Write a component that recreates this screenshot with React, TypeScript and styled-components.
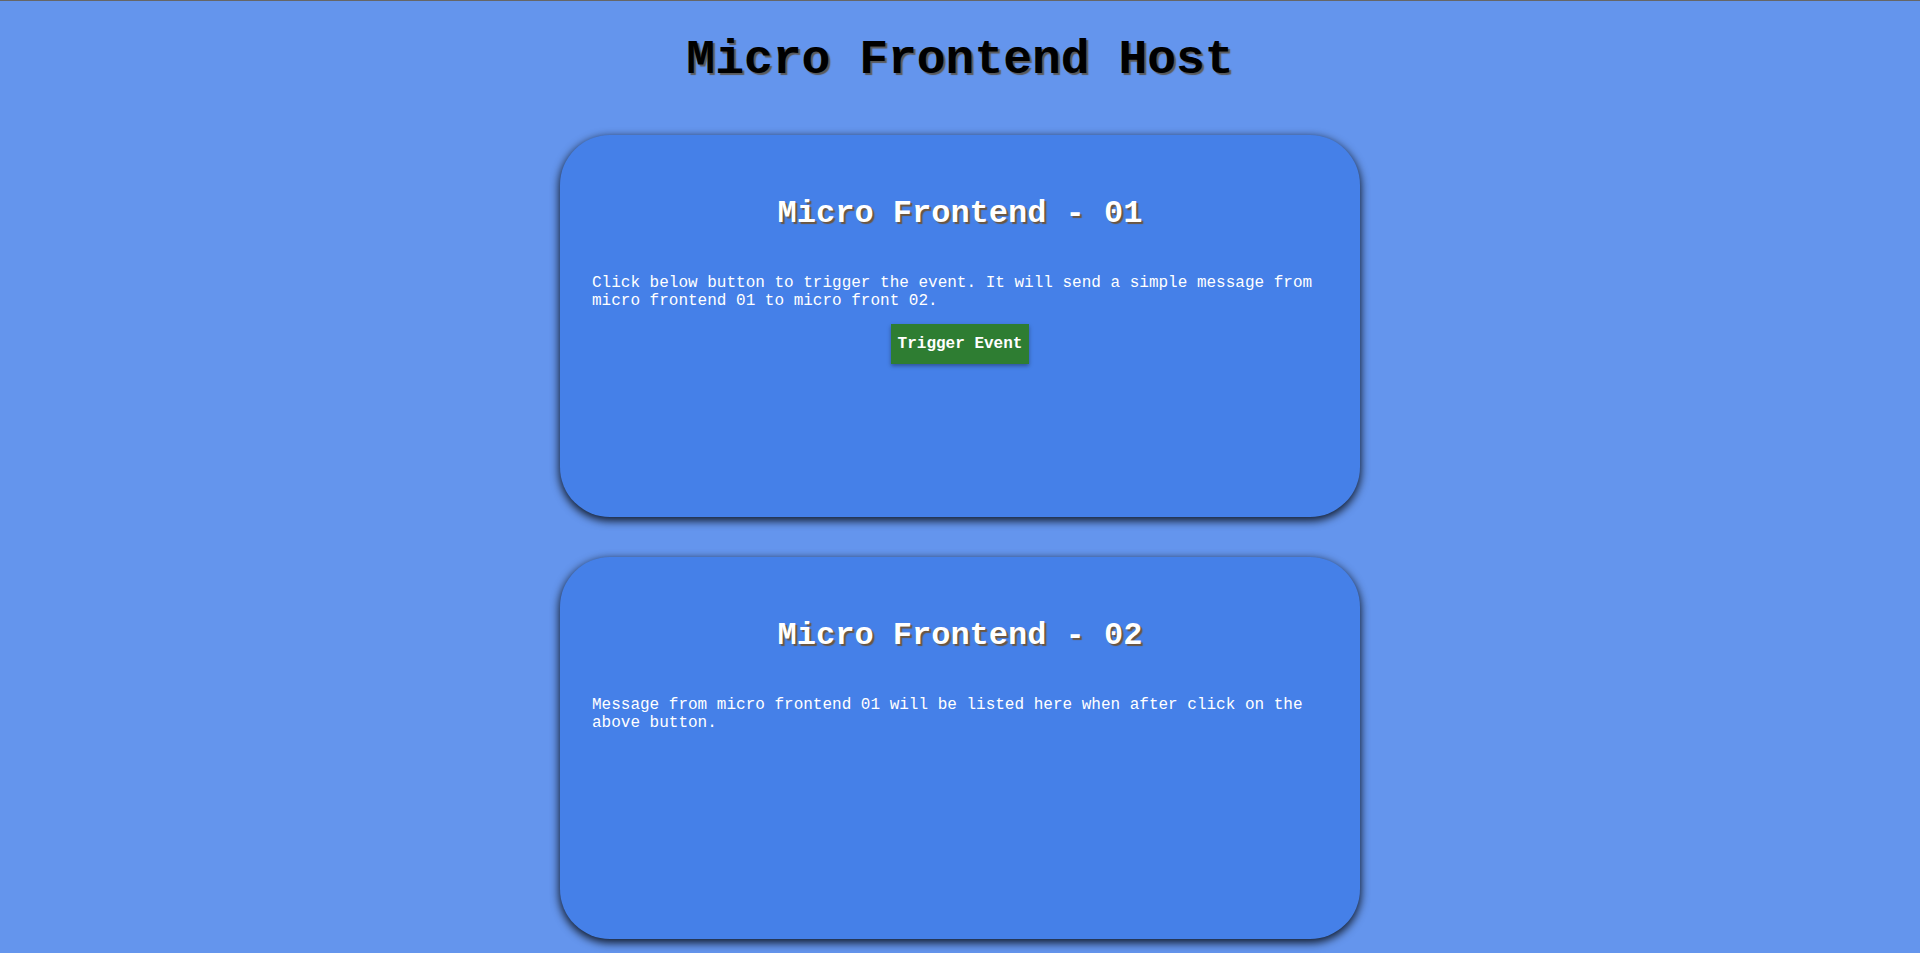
import React from "react";
import styled, { createGlobalStyle } from "styled-components";

const GlobalStyle = createGlobalStyle`
  html, body {
    margin: 0;
    padding: 0;
    background: #6495ed;
  }
  body {
    border-top: 1px solid #666;
    font-family: "Liberation Mono", "Courier New", monospace;
    min-height: 952px;
  }
`;

const Page = styled.div`
  display: flex;
  flex-direction: column;
  align-items: center;
`;

const HostTitle = styled.h1`
  margin: 32px 0 48px;
  font-size: 48px;
  font-weight: bold;
  line-height: 54px;
  color: #000;
  text-shadow: 2px 2px 1px #5a5a5a;
`;

const Cards = styled.div`
  display: flex;
  flex-direction: column;
  gap: 40px;
`;

const Card = styled.section`
  box-sizing: border-box;
  width: 800px;
  height: 382px;
  padding: 61px 32px 0;
  background: #4580e8;
  border-radius: 50px;
  box-shadow: 0 3px 8px 1px rgba(0, 0, 0, 0.8);
  color: #fff;
  display: flex;
  flex-direction: column;
`;

const CardTitle = styled.h2`
  margin: 0 0 42px;
  font-size: 32px;
  line-height: 36px;
  font-weight: bold;
  text-align: center;
  color: #fff;
  text-shadow: 2px 2px 1px #6b5640;
`;

const Text = styled.p`
  margin: 0;
  font-size: 16px;
  line-height: 18px;
  color: #fff;
`;

const ButtonRow = styled.div`
  display: flex;
  justify-content: center;
  margin-top: 14px;
`;

const TriggerButton = styled.button`
  box-sizing: border-box;
  height: 40px;
  padding: 0 7px;
  border: none;
  background: #2e7d32;
  color: #fff;
  font-family: "Liberation Mono", "Courier New", monospace;
  font-size: 16px;
  font-weight: bold;
  line-height: 18px;
  box-shadow: 0 2px 4px rgba(0, 0, 0, 0.35);
  cursor: pointer;
`;

export default function App() {
  return (
    <>
      <GlobalStyle />
      <Page>
        <HostTitle>Micro Frontend Host</HostTitle>
        <Cards>
          <Card>
            <CardTitle>Micro Frontend - 01</CardTitle>
            <Text>
              Click below button to trigger the event. It will send a simple message from micro
              frontend 01 to micro front 02.
            </Text>
            <ButtonRow>
              <TriggerButton>Trigger Event</TriggerButton>
            </ButtonRow>
          </Card>
          <Card>
            <CardTitle>Micro Frontend - 02</CardTitle>
            <Text>
              Message from micro frontend 01 will be listed here when after click on the above
              button.
            </Text>
          </Card>
        </Cards>
      </Page>
    </>
  );
}
